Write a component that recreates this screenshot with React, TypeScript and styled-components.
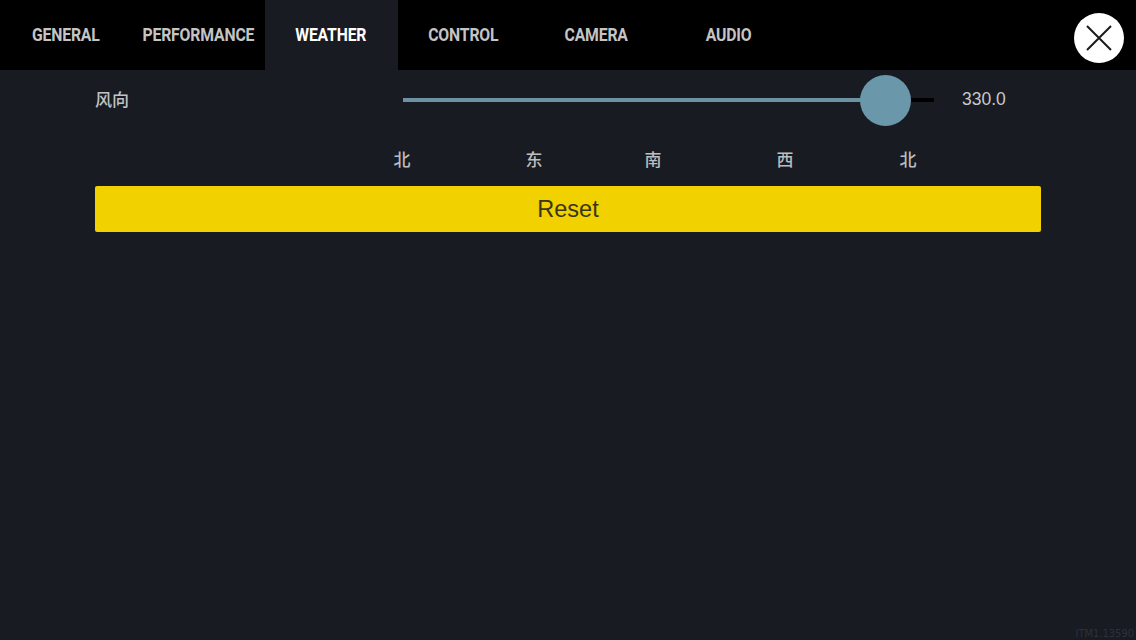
import React, { useState } from 'react';
import styled, { createGlobalStyle } from 'styled-components';

const GlobalStyle = createGlobalStyle`
  html, body {
    margin: 0;
    padding: 0;
    background: #181b22;
  }
  #root {
    width: 1136px;
    height: 640px;
  }
`;

const Page = styled.div`
  position: relative;
  width: 1136px;
  height: 640px;
  background: #181b22;
  display: flex;
  flex-direction: column;
  overflow: hidden;
  font-family: 'Liberation Sans', 'Noto Sans CJK SC', sans-serif;
`;

const TopBar = styled.div`
  height: 70px;
  background: #000;
  display: flex;
  align-items: stretch;
  padding-right: 12px;
`;

const Tabs = styled.div`
  display: flex;
  flex: 1;
`;

const Tab = styled.div<{ $active?: boolean }>`
  width: 132.5px;
  display: flex;
  align-items: center;
  justify-content: center;
  padding-bottom: 1px;
  background: ${p => (p.$active ? '#181b22' : 'transparent')};
  color: ${p => (p.$active ? '#ffffff' : '#c4c4c4')};
  cursor: pointer;
`;

const TabText = styled.span`
  display: inline-block;
  font-family: 'Roboto', sans-serif;
  font-weight: 700;
  font-size: 19px;
  letter-spacing: -0.2px;
  transform: scaleX(0.83);
  white-space: nowrap;
`;

const CloseButton = styled.button`
  align-self: center;
  margin-top: 6px;
  width: 50px;
  height: 50px;
  border-radius: 50%;
  border: none;
  background: #fff;
  display: flex;
  align-items: center;
  justify-content: center;
  padding: 0;
  cursor: pointer;
`;

const Content = styled.div`
  padding: 0 95px;
  display: flex;
  flex-direction: column;
`;

const SliderRow = styled.div`
  height: 58px;
  display: flex;
  align-items: center;
`;

const Label = styled.div`
  width: 308px;
  color: #c2c2c2;
  font-size: 17px;
  font-weight: 500;
  font-family: 'Noto Sans CJK SC', sans-serif;
  padding-bottom: 2px;
`;

const Track = styled.div`
  position: relative;
  width: 531px;
  height: 4px;
  background: #000;
  margin-top: 1px;
`;

const TrackFill = styled.div`
  height: 100%;
  background: #6c92a3;
`;

const Thumb = styled.div`
  position: absolute;
  top: 50%;
  width: 51px;
  height: 51px;
  margin-left: -25px;
  margin-top: -25px;
  border-radius: 50%;
  background: #6a97aa;
`;

const Value = styled.div`
  margin-left: 28px;
  color: #c8c8c8;
  font-size: 17.5px;
`;

const CompassRow = styled.div`
  position: relative;
  height: 56px;
  margin-top: 2px;
`;

const Direction = styled.span`
  position: absolute;
  top: 50%;
  transform: translate(-50%, -50%);
  color: #bdbdbd;
  font-size: 17px;
  font-weight: 500;
  font-family: 'Noto Sans CJK SC', sans-serif;
`;

const ResetButton = styled.button`
  height: 46px;
  width: 100%;
  border: none;
  border-radius: 2px;
  background: #f2d100;
  color: #3a3619;
  font-family: 'Liberation Sans', sans-serif;
  font-size: 23.5px;
  cursor: pointer;
`;

const Watermark = styled.div`
  position: absolute;
  right: 2px;
  bottom: 0;
  color: #2c323c;
  font-size: 11px;
  font-family: 'DejaVu Sans Condensed', sans-serif;
`;

const TABS = ['GENERAL', 'PERFORMANCE', 'WEATHER', 'CONTROL', 'CAMERA', 'AUDIO'];

// label positions relative to content left edge (95px)
const DIRECTIONS = [
  { label: '北', x: 307 },
  { label: '东', x: 439 },
  { label: '南', x: 558 },
  { label: '西', x: 690 },
  { label: '北', x: 813 },
];

const App: React.FC = () => {
  const [active, setActive] = useState('WEATHER');
  const [value] = useState(330);
  const percent = (482 / 531) * (value / 330) * 100;

  return (
    <Page>
      <GlobalStyle />
      <TopBar>
        <Tabs>
          {TABS.map(t => (
            <Tab key={t} $active={t === active} onClick={() => setActive(t)}>
              <TabText>{t}</TabText>
            </Tab>
          ))}
        </Tabs>
        <CloseButton aria-label="close">
          <svg width="26" height="26" viewBox="0 0 26 26">
            <path d="M1 1 L25 25 M25 1 L1 25" stroke="#1a1a1a" strokeWidth="2" fill="none" />
          </svg>
        </CloseButton>
      </TopBar>
      <Content>
        <SliderRow>
          <Label>风向</Label>
          <Track>
            <TrackFill style={{ width: `${percent}%` }} />
            <Thumb style={{ left: `${percent}%` }} />
          </Track>
          <Value>{value.toFixed(1)}</Value>
        </SliderRow>
        <CompassRow>
          {DIRECTIONS.map((d, i) => (
            <Direction key={i} style={{ left: d.x }}>
              {d.label}
            </Direction>
          ))}
        </CompassRow>
        <ResetButton>Reset</ResetButton>
      </Content>
      <Watermark>ITM1.13590</Watermark>
    </Page>
  );
};

export default App;
